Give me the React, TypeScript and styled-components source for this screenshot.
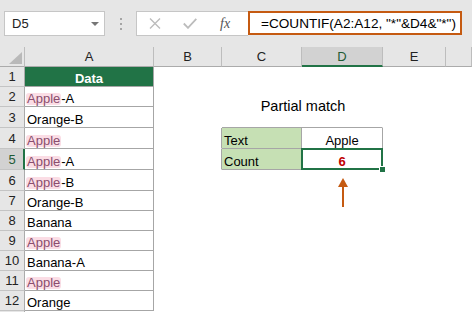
import styled, { createGlobalStyle } from 'styled-components'

const GlobalStyle = createGlobalStyle`
  html, body {
    margin: 0;
    padding: 0;
    background: #fff;
  }
  body {
    font-family: 'Liberation Sans', Arial, sans-serif;
  }
`

const Window = styled.div`
  width: 472px;
  height: 312px;
  overflow: hidden;
  background: #fff;
  display: flex;
  flex-direction: column;
`

const Toolbar = styled.div`
  height: 47px;
  flex: none;
  box-sizing: border-box;
  background: #e6e6e6;
  display: flex;
  align-items: flex-start;
  padding: 11px 0 0 4px;
`

const NameBox = styled.div`
  width: 101px;
  height: 25px;
  box-sizing: border-box;
  background: #fff;
  border: 1px solid #c6c6c6;
  display: flex;
  align-items: center;
  justify-content: space-between;
  padding: 0 5px 0 7px;
  font-size: 13px;
  color: #222;
`

const DropArrow = styled.span`
  width: 0;
  height: 0;
  border-left: 4px solid transparent;
  border-right: 4px solid transparent;
  border-top: 4px solid #767676;
`

const Grip = styled.div`
  width: 31px;
  height: 25px;
  display: flex;
  flex-direction: column;
  align-items: center;
  justify-content: center;
  gap: 3px;
`

const GripDot = styled.span`
  width: 2px;
  height: 2px;
  background: #a5a5a5;
`

const FormulaButtons = styled.div`
  width: 112px;
  height: 25px;
  box-sizing: border-box;
  background: #fff;
  border: 1px solid #c6c6c6;
  border-right: none;
  display: flex;
  align-items: center;
  padding-left: 12px;
  gap: 22px;
`

const Fx = styled.span`
  font-family: 'Liberation Serif', 'Times New Roman', serif;
  font-style: italic;
  font-size: 14px;
  color: #555;
  margin-left: 1px;
`

const FormulaInput = styled.div`
  width: 214px;
  height: 24px;
  box-sizing: border-box;
  background: #fff;
  border: 2px solid #c55a11;
  display: flex;
  align-items: center;
  padding-left: 11px;
  font-size: 13.6px;
  color: #000;
  white-space: nowrap;
`

const Sheet = styled.div`
  position: relative;
  flex: 1;
  display: grid;
  grid-template-columns: 25px 129px 68px 80px 81px 63px 1fr;
  grid-template-rows: 20px 20px 20px 21px 21px 21px 21px 20px 20px 20px 20px 20px 20px 20px;
  font-size: 13px;
  color: #000;
`

const Corner = styled.div`
  box-sizing: border-box;
  background: #e6e6e6;
  border-right: 1px solid #bdbdbd;
  border-bottom: 1px solid #ababab;
  display: flex;
  align-items: flex-end;
  justify-content: flex-end;
  padding: 0 2px 2px 0;
`

const CornerMark = styled.span`
  width: 0;
  height: 0;
  border-left: 13px solid transparent;
  border-bottom: 12px solid #b9b9b9;
`

const ColHead = styled.div<{ $active?: boolean }>`
  box-sizing: border-box;
  display: flex;
  align-items: center;
  justify-content: center;
  background: ${(p) => (p.$active ? '#d2d2d2' : '#e6e6e6')};
  color: ${(p) => (p.$active ? '#1e5b36' : '#222')};
  border-right: 1px solid #bdbdbd;
  border-bottom: ${(p) => (p.$active ? '2px solid #217346' : '1px solid #ababab')};
  padding-top: ${(p) => (p.$active ? '1px' : '0')};
`

const RowHead = styled.div<{ $active?: boolean }>`
  box-sizing: border-box;
  display: flex;
  align-items: center;
  justify-content: center;
  background: ${(p) => (p.$active ? '#d2d2d2' : '#e6e6e6')};
  color: ${(p) => (p.$active ? '#1e5b36' : '#222')};
  border-right: ${(p) => (p.$active ? '2px solid #217346' : '1px solid #ababab')};
  border-bottom: 1px solid #c4c4c4;
  padding-left: ${(p) => (p.$active ? '1px' : '0')};
`

const Cell = styled.div<{ $r?: boolean; $b?: boolean; $fill?: string; $center?: boolean }>`
  box-sizing: border-box;
  min-width: 0;
  display: flex;
  align-items: flex-end;
  justify-content: ${(p) => (p.$center ? 'center' : 'flex-start')};
  padding: 0 2px;
  line-height: 15px;
  white-space: nowrap;
  background: ${(p) => p.$fill ?? '#fff'};
  border-right: 1px solid ${(p) => (p.$r ? '#a6a6a6' : 'transparent')};
  border-bottom: 1px solid ${(p) => (p.$b ? '#a6a6a6' : 'transparent')};
`

const HeaderCell = styled(Cell)`
  background: #217346;
  color: #fff;
  font-weight: bold;
  justify-content: center;
`

const TitleCell = styled(Cell)`
  grid-column: span 2;
  align-items: flex-start;
  justify-content: center;
  overflow: visible;
`

const Title = styled.span`
  font-size: 14.5px;
  margin-top: -8px;
  margin-left: 2px;
`

const ActiveCell = styled(Cell)`
  position: relative;
  color: #c00000;
  font-weight: bold;

  &::after {
    content: '';
    position: absolute;
    top: -1px;
    left: -1px;
    right: -1px;
    bottom: -1px;
    border: 2px solid #217346;
  }

  &::before {
    content: '';
    position: absolute;
    right: -4px;
    bottom: -4px;
    width: 5px;
    height: 5px;
    background: #217346;
    border: 1px solid #fff;
    z-index: 1;
  }
`

const Match = styled.span`
  display: inline-block;
  line-height: 12px;
  background: #fbdde5;
  color: #8a4d6e;
  border-radius: 3px;
  padding: 0 1px;
  margin-left: -1px;
`

const Arrow = styled.svg`
  position: absolute;
  left: 338px;
  top: 131px;
`

const columns = ['A', 'B', 'C', 'D', 'E', '']

const values = [
  'Data',
  'Apple-A',
  'Orange-B',
  'Apple',
  'Apple-A',
  'Apple-B',
  'Orange-B',
  'Banana',
  'Apple',
  'Banana-A',
  'Apple',
  'Orange',
  '',
]

const CellText = ({ text }: { text: string }) => {
  if (text.startsWith('Apple')) {
    return (
      <span>
        <Match>Apple</Match>
        {text.slice(5)}
      </span>
    )
  }
  return <span>{text}</span>
}

const RightCells = ({ n }: { n: number }) => {
  if (n === 3) {
    return (
      <>
        <Cell />
        <TitleCell $b>
          <Title>Partial match</Title>
        </TitleCell>
        <Cell />
        <Cell />
      </>
    )
  }
  if (n === 4) {
    return (
      <>
        <Cell $r />
        <Cell $r $b $fill="#c6e0b4">Text</Cell>
        <Cell $r $b $center>Apple</Cell>
        <Cell />
        <Cell />
      </>
    )
  }
  if (n === 5) {
    return (
      <>
        <Cell $r />
        <Cell $r $b $fill="#c6e0b4">Count</Cell>
        <ActiveCell $r $b $center>6</ActiveCell>
        <Cell />
        <Cell />
      </>
    )
  }
  return (
    <>
      <Cell />
      <Cell />
      <Cell />
      <Cell />
      <Cell />
    </>
  )
}

export default function App() {
  return (
    <Window>
      <GlobalStyle />
      <Toolbar>
        <NameBox>
          <span>D5</span>
          <DropArrow />
        </NameBox>
        <Grip>
          <GripDot />
          <GripDot />
          <GripDot />
        </Grip>
        <FormulaButtons>
          <svg width="12" height="11" viewBox="0 0 12 11">
            <path d="M1 0.5 L11 10.5 M11 0.5 L1 10.5" stroke="#bcbcbc" strokeWidth="1.4" fill="none" />
          </svg>
          <svg width="14" height="11" viewBox="0 0 14 11">
            <path d="M0.8 5.5 L5 9.8 L13.3 0.8" stroke="#bcbcbc" strokeWidth="1.8" fill="none" />
          </svg>
          <Fx>fx</Fx>
        </FormulaButtons>
        <FormulaInput>=COUNTIF(A2:A12, "*"&amp;D4&amp;"*")</FormulaInput>
      </Toolbar>
      <Sheet>
        <Corner>
          <CornerMark />
        </Corner>
        {columns.map((c) => (
          <ColHead key={c || 'F'} $active={c === 'D'}>
            {c}
          </ColHead>
        ))}
        {values.map((v, i) => {
          const n = i + 1
          return (
            <div key={n} style={{ display: 'contents' }}>
              <RowHead $active={n === 5}>{n < 13 ? n : ''}</RowHead>
              {n === 1 ? (
                <HeaderCell $r $b>
                  {v}
                </HeaderCell>
              ) : (
                <Cell $r={n < 13} $b={n < 13}>
                  <CellText text={v} />
                </Cell>
              )}
              <RightCells n={n} />
            </div>
          )
        })}
        <Arrow width="10" height="29" viewBox="0 0 10 29">
          <polygon points="5,0 10,9 0,9" fill="#c55a11" />
          <rect x="4" y="8" width="2" height="21" fill="#c55a11" />
        </Arrow>
      </Sheet>
    </Window>
  )
}
